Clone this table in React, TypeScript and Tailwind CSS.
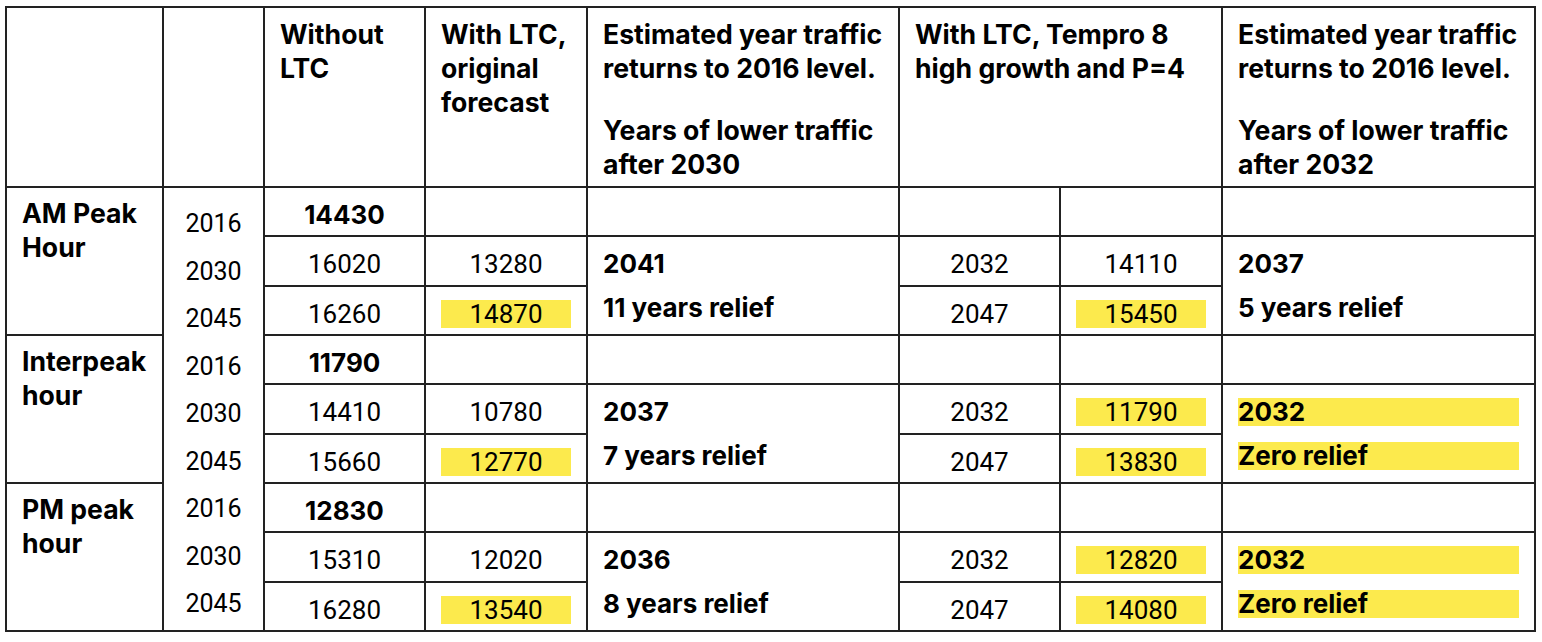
import React from 'react';

type Group = {
    label: [string, string];
    base: string;
    rows: {
        without: string;
        original: string;
        originalHi?: boolean;
        tYear: string;
        tValue: string;
        tHi?: boolean;
    }[];
    relief1: [string, string];
    relief2: [string, string];
    relief2Hi?: boolean;
};

const groups: Group[] = [
    {
        label: ['AM Peak', 'Hour'],
        base: '14430',
        rows: [
            { without: '16020', original: '13280', tYear: '2032', tValue: '14110' },
            { without: '16260', original: '14870', originalHi: true, tYear: '2047', tValue: '15450', tHi: true },
        ],
        relief1: ['2041', '11 years relief'],
        relief2: ['2037', '5 years relief'],
    },
    {
        label: ['Interpeak', 'hour'],
        base: '11790',
        rows: [
            { without: '14410', original: '10780', tYear: '2032', tValue: '11790', tHi: true },
            { without: '15660', original: '12770', originalHi: true, tYear: '2047', tValue: '13830', tHi: true },
        ],
        relief1: ['2037', '7 years relief'],
        relief2: ['2032', 'Zero relief'],
        relief2Hi: true,
    },
    {
        label: ['PM peak', 'hour'],
        base: '12830',
        rows: [
            { without: '15310', original: '12020', tYear: '2032', tValue: '12820', tHi: true },
            { without: '16280', original: '13540', originalHi: true, tYear: '2047', tValue: '14080', tHi: true },
        ],
        relief1: ['2036', '8 years relief'],
        relief2: ['2032', 'Zero relief'],
        relief2Hi: true,
    },
];

const years = ['2016', '2030', '2045', '2016', '2030', '2045', '2016', '2030', '2045'];

// shared cell border; top padding is set per cell type
const cell = 'border-2 border-[#222] align-top pb-0';
const td = `${cell} px-[15px] pt-[13px]`;
const th = `${cell} pl-[15px] pr-[12px] pt-[9px]`;
const bold = "font-['Inter',sans-serif] font-bold";

// one value inside a body cell, optionally with the yellow marker
const Val = ({ v, hi, strong }: { v: string; hi?: boolean; strong?: boolean }) => (
    <div className={`h-[28px] leading-[28px] text-center ${hi ? 'bg-[#fcea4d]' : ''} ${strong ? bold : ''}`}>
        {v}
    </div>
);

const Relief = ({ lines, hi }: { lines: [string, string]; hi?: boolean }) => (
    <div className={bold}>
        <div className={`h-[28px] leading-[28px] ${hi ? 'bg-[#fcea4d]' : ''}`}>{lines[0]}</div>
        <div className={`mt-[16px] h-[28px] leading-[28px] ${hi ? 'bg-[#fcea4d]' : ''}`}>{lines[1]}</div>
    </div>
);

export default function App() {
    return (
        <div className="min-h-screen bg-white pl-[5px] pt-[6px] font-['Roboto',sans-serif] text-[26px] text-black">
            <table className="table-fixed border-collapse w-[1529px]">
                <colgroup>
                    <col className="w-[157px]" />
                    <col className="w-[101px]" />
                    <col className="w-[161px]" />
                    <col className="w-[162px]" />
                    <col className="w-[312px]" />
                    <col className="w-[161px]" />
                    <col className="w-[162px]" />
                    <col className="w-[313px]" />
                </colgroup>
                <thead>
                    <tr className={`h-[180px] text-[26.6px] ${bold} leading-[34px] text-left`}>
                        <th className={th}></th>
                        <th className={th}></th>
                        <th className={th}>Without<br />LTC</th>
                        <th className={th}>With LTC,<br />original<br />forecast</th>
                        <th className={th}>
                            <p>Estimated year traffic returns to 2016 level.</p>
                            <p className="mt-[28px]">Years of lower traffic after 2030</p>
                        </th>
                        <th colSpan={2} className={th}>With LTC, Tempro 8 high growth and P=4</th>
                        <th className={th}>
                            <p>Estimated year traffic returns to 2016 level.</p>
                            <p className="mt-[28px]">Years of lower traffic after 2032</p>
                        </th>
                    </tr>
                </thead>
                <tbody>
                    {groups.map((g, gi) => (
                        <React.Fragment key={gi}>
                            <tr className="h-[49px]">
                                <td rowSpan={3} className={`${cell} px-[15px] pt-[8px] ${bold} text-[26.6px] leading-[34px]`}>
                                    {g.label[0]}<br />{g.label[1]}
                                </td>
                                {gi === 0 && (
                                    <td rowSpan={9} className={`${cell} px-0 pt-[12px] text-center text-[25px]`}>
                                        {years.map((y, i) => (
                                            <div key={i} className="h-[47.5px] leading-[47.5px]">{y}</div>
                                        ))}
                                    </td>
                                )}
                                <td className={td}><Val v={g.base} strong /></td>
                                <td className={td}></td>
                                <td className={td}></td>
                                <td className={td}></td>
                                <td className={td}></td>
                                <td className={td}></td>
                            </tr>
                            {g.rows.map((r, ri) => (
                                <tr key={ri} className={ri === 0 ? 'h-[50px]' : 'h-[49px]'}>
                                    <td className={td}><Val v={r.without} /></td>
                                    <td className={td}><Val v={r.original} hi={r.originalHi} /></td>
                                    {ri === 0 && (
                                        <td rowSpan={2} className={td}><Relief lines={g.relief1} /></td>
                                    )}
                                    <td className={td}><Val v={r.tYear} /></td>
                                    <td className={td}><Val v={r.tValue} hi={r.tHi} /></td>
                                    {ri === 0 && (
                                        <td rowSpan={2} className={td}><Relief lines={g.relief2} hi={g.relief2Hi} /></td>
                                    )}
                                </tr>
                            ))}
                        </React.Fragment>
                    ))}
                </tbody>
            </table>
        </div>
    );
}
